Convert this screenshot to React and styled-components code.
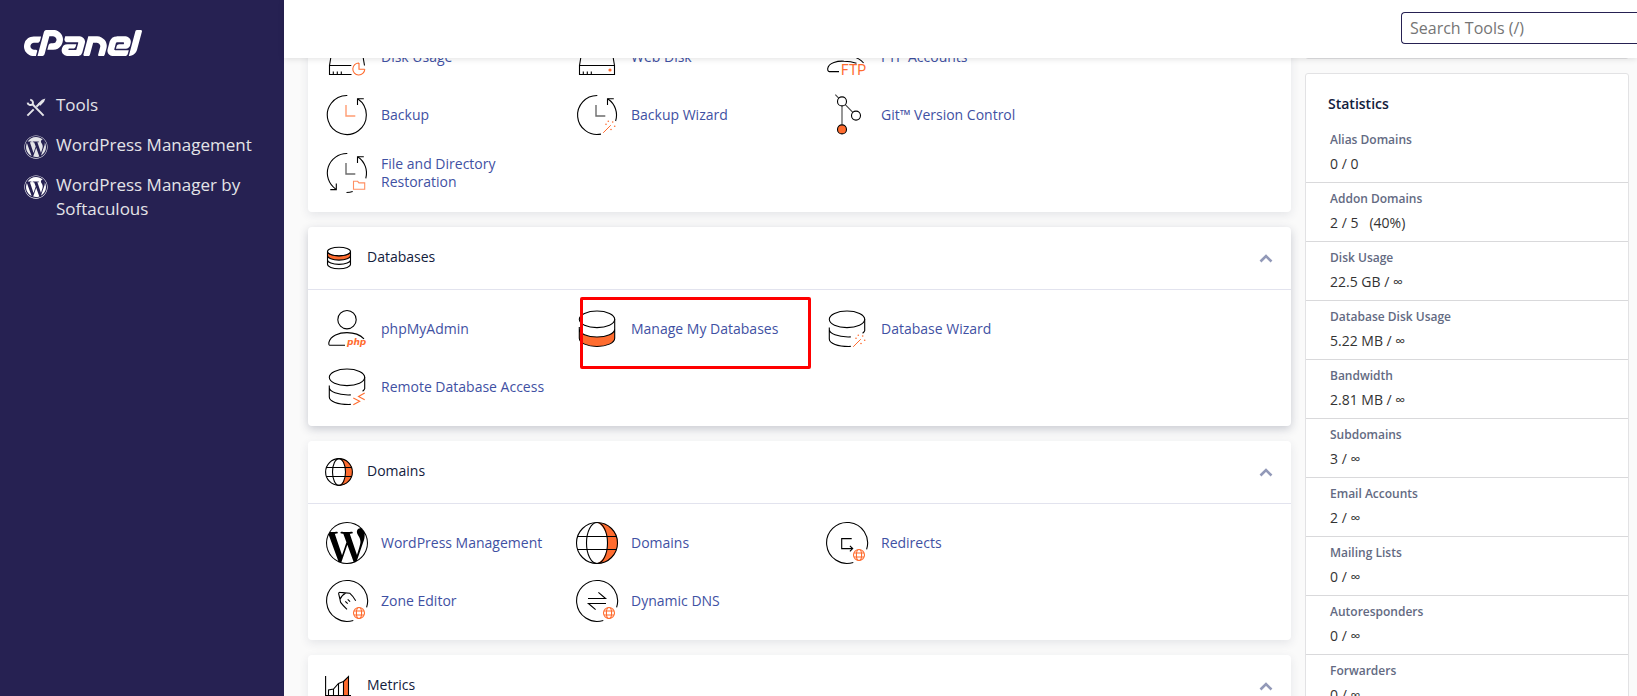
import React, { useState } from 'react';
import styled, { createGlobalStyle } from 'styled-components';
import { FaWordpress } from 'react-icons/fa';
import { SiCpanel } from 'react-icons/si';

const ORANGE = '#ff6c2f';
const GREY = '#6b6b6b';

const GlobalStyle = createGlobalStyle`
  * {
    box-sizing: border-box;
  }
  body {
    margin: 0;
    background-color: #fafafa;
    font-family: "Open Sans", "Noto Sans", sans-serif;
    font-size: 14px;
    color: #333333;
  }
`;

const Page = styled.div`
  display: flex;
  height: 100vh;
  overflow: hidden;
`;

const Sidebar = styled.aside`
  flex: 0 0 284px;
  padding: 30px 24px;
  background-color: #262152;
`;

// the wordmark is a thin band in the middle of a square icon
const LogoLink = styled.a`
  display: flex;
  align-items: center;
  height: 26px;
  overflow: hidden;
  color: #ffffff;
  svg {
    flex: none;
  }
`;

const Nav = styled.nav`
  display: flex;
  flex-direction: column;
  gap: 14px;
  margin-top: 37px;
`;

const NavLink = styled.a`
  display: flex;
  align-items: flex-start;
  gap: 8px;
  color: #e4e4e8;
  font-size: 17px;
  line-height: 24px;
  text-decoration: none;
  svg {
    flex: none;
    margin-top: 2px;
  }
`;

const Main = styled.div`
  flex: 1;
  min-width: 0;
  display: flex;
  flex-direction: column;
`;

const Header = styled.header`
  position: relative;
  z-index: 1;
  flex: 0 0 58px;
  display: flex;
  justify-content: flex-end;
  align-items: flex-start;
  padding-top: 12px;
  background-color: #ffffff;
  box-shadow: 0 1px 6px rgba(0, 0, 0, 0.12);
`;

const SearchInput = styled.input`
  width: 236px;
  height: 32px;
  padding: 0 8px;
  border: 1px solid #262152;
  border-right: none;
  border-radius: 4px 0 0 4px;
  background-color: #ffffff;
  font-family: inherit;
  font-size: 16px;
  &::placeholder {
    color: #757575;
  }
`;

// the content is scrolled part of the way under the header
const Content = styled.main`
  display: flex;
  align-items: flex-start;
  gap: 14px;
  margin-top: -40px;
  padding: 0 8px 0 24px;
`;

const Groups = styled.div`
  flex: 1;
  min-width: 0;
  display: flex;
  flex-direction: column;
  gap: 15px;
`;

const Card = styled.section`
  border-radius: 4px;
  background-color: #ffffff;
  box-shadow: ${(props) =>
    props.$raised
      ? '0 3px 10px rgba(40, 50, 80, 0.24)'
      : '0 3px 10px rgba(40, 50, 80, 0.1)'};
`;

const CardHeader = styled.div`
  display: flex;
  align-items: center;
  gap: 14px;
  height: 63px;
  padding: 0 17px;
  border-bottom: 1px solid #e2e3ee;
`;

const CardTitle = styled.h2`
  flex: 1;
  margin: 0;
  padding-bottom: 2px;
  color: #12203c;
  font-size: 14px;
  font-weight: 400;
  line-height: 20px;
`;

const ToggleButton = styled.button`
  display: flex;
  padding: 0;
  border: none;
  background: none;
  cursor: pointer;
`;

const ToolGrid = styled.div`
  display: grid;
  grid-template-columns: repeat(auto-fill, 250px);
  padding: 10px 17px;
`;

const ToolLink = styled.a`
  position: relative;
  display: flex;
  align-items: center;
  gap: 12px;
  height: 58px;
  padding-right: 20px;
  color: #3f51a3;
  line-height: 18px;
  text-decoration: none;
  svg {
    flex: none;
  }
  &:hover {
    text-decoration: underline;
  }
`;

const Highlight = styled.span`
  position: absolute;
  left: 5px;
  top: -3px;
  width: 231px;
  height: 72px;
  border: 3px solid #ff0000;
  border-radius: 2px;
  pointer-events: none;
`;

const Side = styled.aside`
  flex: 0 0 324px;
  display: flex;
  flex-direction: column;
  gap: 14px;
`;

const Panel = styled.section`
  min-height: 41px;
  border: 1px solid #e2e2e4;
  border-radius: 3px;
  background-color: #ffffff;
`;

const PanelTitle = styled.h2`
  margin: 0;
  padding: 20px 22px 10px;
  color: #12203c;
  font-size: 14px;
  font-weight: 600;
  line-height: 20px;
`;

const StatList = styled.dl`
  margin: 0;
`;

const StatRow = styled.div`
  padding: 7px 24px 8px;
  border-bottom: 1px solid #d9d9db;
`;

const StatLabel = styled.dt`
  margin-bottom: 5px;
  color: #636a82;
  font-size: 12px;
  font-weight: 600;
  line-height: 18px;
`;

const StatValue = styled.dd`
  margin: 0;
  line-height: 20px;
`;

const Percent = styled.span`
  margin-left: 11px;
`;

const Icon = ({ size = 44, children }) => (
  <svg
    width={size}
    height={size}
    viewBox={`0 0 ${size} ${size}`}
    fill="none"
    stroke="#000000"
    strokeWidth="1.1"
    aria-hidden="true"
  >
    {children}
  </svg>
);

const Wand = () => (
  <g stroke={ORANGE}>
    <path d="M28.2 39.8l7.6-7.6" strokeWidth="1" />
    <g fill={ORANGE} stroke="none">
      <circle cx="31" cy="31.3" r="0.8" />
      <circle cx="33.3" cy="28.3" r="0.8" />
      <circle cx="37.7" cy="29" r="0.8" />
      <circle cx="39.7" cy="33.3" r="0.8" />
      <circle cx="36" cy="36.5" r="0.8" />
    </g>
  </g>
);

const ClockParts = ({ hands = GREY }) => (
  <>
    <path d="M32.5 12V5.7h6.3" />
    <path d="M21 12v11h9.3" stroke={hands} strokeWidth="1.4" />
  </>
);

const BackupIcon = () => (
  <Icon>
    <path d="M22.3 2.5A19.5 19.5 0 1 0 33 6" />
    <ClockParts hands="#ff9c72" />
  </Icon>
);

const BackupWizardIcon = () => (
  <Icon>
    <path d="M22.3 2.5A19.5 19.5 0 1 0 26 41.1M40.6 28A19.5 19.5 0 0 0 33 6" />
    <ClockParts />
    <Wand />
  </Icon>
);

const RestoreIcon = () => (
  <Icon>
    <path d="M22.3 2.5A19.5 19.5 0 0 0 10.7 38M21.5 41.5Q25 41.5 27.7 40.6M40.8 27.3A19.5 19.5 0 0 0 33 6" />
    <path d="M11.3 32.5v6.1H5.3" />
    <ClockParts />
    <path d="M28.5 38.3v-8h4.2l1.2 1.6h5.8v6.4z" stroke="#ff8f62" />
  </Icon>
);

const DiskUsageIcon = () => (
  <Icon>
    <path d="M26.3 30.5H4.5v9h22M4.5 30.5l2-12h31l2 12M8.3 39.5v-3M12.3 39.5v-3M16.3 39.5v-3" />
    <path d="M34 28v6.3h5.7M34 28a6 6 0 1 0 5.8 6.3" stroke={ORANGE} />
  </Icon>
);

const WebDiskIcon = () => (
  <Icon>
    <path d="M4.5 30.5h35v9h-35zM4.5 30.5l2-12h31l2 12M8.3 39.5v-3M12.3 39.5v-3M16.3 39.5v-3" />
    <circle cx="35" cy="35" r="1.6" fill={ORANGE} stroke="none" />
  </Icon>
);

const FtpIcon = () => (
  <Icon>
    <path d="M14 36.6H4.2Q2.6 36.6 2.7 33.6C3.5 27.6 13 25.8 19 26.2Q26 26.4 31.5 28.2M28 21.5Q34 23 38.6 28" />
    <text
      x="16"
      y="40"
      fill={ORANGE}
      stroke="none"
      fontSize="14"
      fontWeight="400"
      fontFamily="Roboto, sans-serif"
    >
      FTP
    </text>
  </Icon>
);

const GitIcon = () => (
  <Icon>
    <path d="M10.3 1.7l3.4 3.4M20.3 11.6l7.5 7.8M17 13v18.8" stroke="#444444" />
    <circle cx="17" cy="8.4" r="4.5" />
    <circle cx="31" cy="22.6" r="4.5" />
    <circle cx="17" cy="36.4" r="4.5" fill={ORANGE} />
  </Icon>
);

const PhpMyAdminIcon = () => (
  <Icon>
    <circle cx="22" cy="12.7" r="9.2" />
    <path d="M20 38.2H4.5Q3.6 38.2 3.9 35.4C5.5 28.6 14 25.6 22 25.6Q33 25.6 39 31.8" />
    <text
      x="22"
      y="38"
      fill={ORANGE}
      stroke="none"
      fontSize="9"
      fontWeight="700"
      fontStyle="italic"
      fontFamily="DejaVu Sans, sans-serif"
    >
      php
    </text>
  </Icon>
);

const ManageDbIcon = () => (
  <Icon>
    <path d="M4.3 22c0 4.6 8 8 17.7 8s17.7-3.4 17.7-8v9.3c0 4.6-8 8.2-17.7 8.2S4.3 36 4.3 31.3z" fill={ORANGE} stroke="none" />
    <ellipse cx="22" cy="12.3" rx="17.7" ry="8.3" />
    <path d="M4.3 20v11.3c0 4.6 8 8.2 17.7 8.2s17.7-3.6 17.7-8.2V12.3M4.3 22c0 4.6 8 8 17.7 8s17.7-3.4 17.7-8" />
  </Icon>
);

const OpenCylinder = () => (
  <>
    <ellipse cx="22" cy="12.3" rx="17.7" ry="8.3" />
    <path d="M39.7 12.3v11.4Q39.4 25 37.6 26.3M4.3 20.5V32c0 4.2 8 7.8 21.5 7.4M4.3 22.5c0 3.8 8 8 21.5 7.4" />
  </>
);

const DbWizardIcon = () => (
  <Icon>
    <OpenCylinder />
    <Wand />
  </Icon>
);

const RemoteDbIcon = () => (
  <Icon>
    <OpenCylinder />
    <path d="M28.3 33l6.4 3.2-6.4 3.5M39.7 28l-6.2 3.4 6.2 3.3" stroke={ORANGE} />
  </Icon>
);

// white logo over a black disc, which shows through as the letter and a thin ring
const WordPressIcon = () => (
  <Icon>
    <circle cx="22" cy="22" r="21" fill="#000000" stroke="none" />
    <g transform="translate(-2 -2)" stroke="none">
      <FaWordpress size={48} color="#ffffff" />
    </g>
  </Icon>
);

const GlobeIcon = () => (
  <Icon>
    <path d="M22 1.4a20.6 20.6 0 0 1 0 41.2c6-3 10.6-10.6 10.6-20.6S28 4.4 22 1.4z" fill={ORANGE} stroke="none" />
    <circle cx="22" cy="22" r="20.5" />
    <ellipse cx="22" cy="22" rx="10.5" ry="20.5" />
    <path d="M2.6 15.5h38.8M2.6 28.5h38.8" />
  </Icon>
);

// ring left open at the lower right, where the small globe sits
const RingWithGlobe = ({ children }) => (
  <Icon>
    <path d="M28.3 41.5A20.5 20.5 0 1 1 41.6 28.3" />
    {children}
    <g stroke={ORANGE}>
      <circle cx="34" cy="34" r="5.5" />
      <ellipse cx="34" cy="34" rx="2.6" ry="5.5" />
      <path d="M29 32h10M29 36h10" />
    </g>
  </Icon>
);

const ZoneEditorIcon = () => (
  <RingWithGlobe>
    <path d="M22 30.3q-4-3.6-6.2-6.6-.6-1.4-.8-3.4l-1.3-5.5q-.2-1.6 1.5-1.4l9.5.8q3 2.6 6 7.6M15.2 20.2q1.2-3.8 5.6-6.2M20.3 22.3l2.4 2.4M22.7 20.3l2.4 2.4" />
  </RingWithGlobe>
);

const RedirectsIcon = () => (
  <RingWithGlobe>
    <path d="M26.7 17.6h-10v10h11.2M24.9 24.8l2.8 2.8-2.8 2.8" />
  </RingWithGlobe>
);

const DynamicDnsIcon = () => (
  <RingWithGlobe>
    <path d="M13 19.5h17.6l-7.2-6.2M31 24.5H13.4l7.2 6.2" />
  </RingWithGlobe>
);

const DatabasesIcon = () => (
  <Icon size={28}>
    <path d="M2.5 7.5c0 2.4 5 4.4 11.5 4.4s11.5-2 11.5-4.4v4.2c0 2.4-5 4.4-11.5 4.4s-11.5-2-11.5-4.4z" fill={ORANGE} />
    <ellipse cx="14" cy="7.5" rx="11.5" ry="4.2" fill="#ffffff" />
    <path d="M2.5 11.7v8.6c0 2.4 5 4.4 11.5 4.4s11.5-2 11.5-4.4v-8.6M2.5 16c0 2.4 5 4.4 11.5 4.4s11.5-2 11.5-4.4" />
  </Icon>
);

const DomainsIcon = () => (
  <Icon size={28}>
    <path d="M14 .5a13.5 13.5 0 0 1 0 27c4-2 6.5-7 6.5-13.5S18 2.5 14 .5z" fill={ORANGE} stroke="none" />
    <circle cx="14" cy="14" r="13.4" />
    <ellipse cx="14" cy="14" rx="6.5" ry="13.4" />
    <path d="M1.3 9.5h25.4M1.3 18.5h25.4" />
  </Icon>
);

const MetricsIcon = () => (
  <Icon size={28}>
    <path d="M18.5 9.5l5-5v19h-5z" fill={ORANGE} />
    <path d="M.6 4v19.5H26M3.5 23.5V18l5-1 5-5.5 5-2M8.5 17v6.5M13.5 11.5v12" />
  </Icon>
);

const ToolsIcon = () => (
  <svg width="24" height="24" viewBox="0 0 24 24" fill="none" stroke="currentColor" aria-hidden="true">
    <path d="M8.5 9.3l11.1 11.3" strokeWidth="2" />
    <path d="M6.2 4.7a3 3 0 0 1 2.3 4.6 3 3 0 0 1-4.9-1.7" strokeWidth="2" />
    <path d="M3.4 20.6l6.3-6.2M12.4 11.7l3-3" strokeWidth="2" />
    <path d="M14.6 9l3.8-3.6 1.6-.6-.6 1.6-3.7 3.8" strokeWidth="1.6" fill="currentColor" />
  </svg>
);

const navItems = [
  { label: 'Tools', icon: <ToolsIcon /> },
  { label: 'WordPress Management', icon: <FaWordpress size={24} /> },
  { label: 'WordPress Manager by Softaculous', icon: <FaWordpress size={24} color="#ffffff" /> },
];

const groups = [
  {
    id: 'files',
    tools: [
      { label: 'Disk Usage', icon: <DiskUsageIcon /> },
      { label: 'Web Disk', icon: <WebDiskIcon /> },
      { label: 'FTP Accounts', icon: <FtpIcon /> },
      { label: 'Backup', icon: <BackupIcon /> },
      { label: 'Backup Wizard', icon: <BackupWizardIcon /> },
      { label: 'Git™ Version Control', icon: <GitIcon /> },
      { label: 'File and Directory Restoration', icon: <RestoreIcon /> },
    ],
  },
  {
    id: 'databases',
    title: 'Databases',
    icon: <DatabasesIcon />,
    raised: true,
    tools: [
      { label: 'phpMyAdmin', icon: <PhpMyAdminIcon /> },
      { label: 'Manage My Databases', icon: <ManageDbIcon />, highlighted: true },
      { label: 'Database Wizard', icon: <DbWizardIcon /> },
      { label: 'Remote Database Access', icon: <RemoteDbIcon /> },
    ],
  },
  {
    id: 'domains',
    title: 'Domains',
    icon: <DomainsIcon />,
    tools: [
      { label: 'WordPress Management', icon: <WordPressIcon /> },
      { label: 'Domains', icon: <GlobeIcon /> },
      { label: 'Redirects', icon: <RedirectsIcon /> },
      { label: 'Zone Editor', icon: <ZoneEditorIcon /> },
      { label: 'Dynamic DNS', icon: <DynamicDnsIcon /> },
    ],
  },
  { id: 'metrics', title: 'Metrics', icon: <MetricsIcon />, tools: [] },
];

const stats = [
  { label: 'Alias Domains', value: '0 / 0' },
  { label: 'Addon Domains', value: '2 / 5', percent: '(40%)' },
  { label: 'Disk Usage', value: '22.5 GB / ∞' },
  { label: 'Database Disk Usage', value: '5.22 MB / ∞' },
  { label: 'Bandwidth', value: '2.81 MB / ∞' },
  { label: 'Subdomains', value: '3 / ∞' },
  { label: 'Email Accounts', value: '2 / ∞' },
  { label: 'Mailing Lists', value: '0 / ∞' },
  { label: 'Autoresponders', value: '0 / ∞' },
  { label: 'Forwarders', value: '0 / ∞' },
];

const ToolGroup = ({ group }) => {
  const [open, setOpen] = useState(true);

  return (
    <Card $raised={group.raised}>
      {group.title && (
        <CardHeader>
          {group.icon}
          <CardTitle>{group.title}</CardTitle>
          <ToggleButton
            type="button"
            aria-label={`Toggle ${group.title}`}
            aria-expanded={open}
            onClick={() => setOpen(!open)}
          >
            <svg width="16" height="16" viewBox="0 0 16 16" fill="none" stroke="#9299b8" strokeWidth="2.6">
              <path d={open ? 'M2.5 11.5L8 6l5.5 5.5' : 'M2.5 5L8 10.5 13.5 5'} />
            </svg>
          </ToggleButton>
        </CardHeader>
      )}
      {open && (
        <ToolGrid>
          {group.tools.map((tool) => (
            <ToolLink key={tool.label} href="#">
              {tool.icon}
              {tool.label}
              {tool.highlighted && <Highlight />}
            </ToolLink>
          ))}
        </ToolGrid>
      )}
    </Card>
  );
};

const App = () => {
  const [search, setSearch] = useState('');

  return (
    <Page>
      <GlobalStyle />
      <Sidebar>
        <LogoLink href="#" aria-label="cPanel">
          <SiCpanel size={118} />
        </LogoLink>
        <Nav>
          {navItems.map((item) => (
            <NavLink key={item.label} href="#">
              {item.icon}
              {item.label}
            </NavLink>
          ))}
        </Nav>
      </Sidebar>
      <Main>
        <Header>
          <SearchInput
            type="text"
            aria-label="Search Tools"
            placeholder="Search Tools (/)"
            value={search}
            onChange={(e) => setSearch(e.target.value)}
          />
        </Header>
        <Content>
          <Groups>
            {groups.map((group) => (
              <ToolGroup key={group.id} group={group} />
            ))}
          </Groups>
          <Side>
            <Panel />
            <Panel>
              <PanelTitle>Statistics</PanelTitle>
              <StatList>
                {stats.map((stat) => (
                  <StatRow key={stat.label}>
                    <StatLabel>{stat.label}</StatLabel>
                    <StatValue>
                      {stat.value}
                      {stat.percent && <Percent>{stat.percent}</Percent>}
                    </StatValue>
                  </StatRow>
                ))}
              </StatList>
            </Panel>
          </Side>
        </Content>
      </Main>
    </Page>
  );
};

export default App;
